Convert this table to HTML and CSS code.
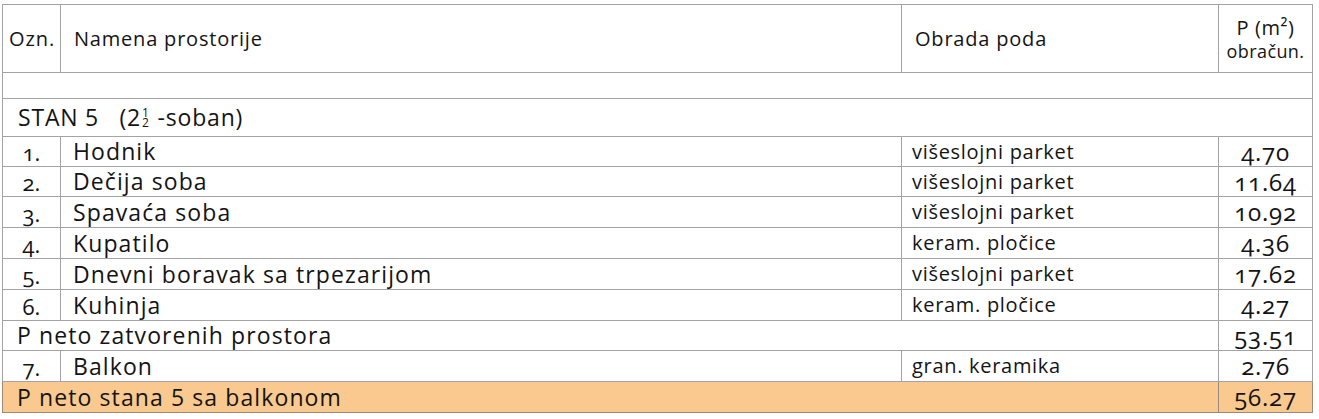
FILE: index.html
```html
<!DOCTYPE html>
<html lang="sr">
<head>
<meta charset="utf-8">
<title>STAN 5</title>
<link rel="stylesheet" href="styles.css">
</head>
<body>
<div class="page">
<table class="rooms">
  <colgroup>
    <col class="c-ozn">
    <col class="c-name">
    <col class="c-floor">
    <col class="c-area">
  </colgroup>
  <tr class="r-head">
    <td class="h-ozn">Ozn.</td>
    <td class="h-name">Namena prostorije</td>
    <td class="h-floor">Obrada poda</td>
    <td class="h-area"><div class="h-p">P (m²)</div><div class="h-obr">obračun.</div></td>
  </tr>
  <tr class="r-empty"><td colspan="4"></td></tr>
  <tr class="r-stan">
    <td colspan="4" class="stan">STAN 5&nbsp;&nbsp; (2<span class="frac"><span>1</span><span>2</span></span> -soban)</td>
  </tr>
  <tr class="r-item r30"><td class="num">1.</td><td class="name">Hodnik</td><td class="floor">višeslojni parket</td><td class="area">4.70</td></tr>
  <tr class="r-item r30"><td class="num">2.</td><td class="name">Dečija soba</td><td class="floor">višeslojni parket</td><td class="area">11.64</td></tr>
  <tr class="r-item"><td class="num">3.</td><td class="name">Spavaća soba</td><td class="floor">višeslojni parket</td><td class="area">10.92</td></tr>
  <tr class="r-item"><td class="num">4.</td><td class="name">Kupatilo</td><td class="floor">keram. pločice</td><td class="area">4.36</td></tr>
  <tr class="r-item"><td class="num">5.</td><td class="name">Dnevni boravak sa trpezarijom</td><td class="floor">višeslojni parket</td><td class="area">17.62</td></tr>
  <tr class="r-item"><td class="num">6.</td><td class="name">Kuhinja</td><td class="floor">keram. pločice</td><td class="area">4.27</td></tr>
  <tr class="r-item r30"><td colspan="3" class="sum">P neto zatvorenih prostora</td><td class="area">53.51</td></tr>
  <tr class="r-item"><td class="num">7.</td><td class="name">Balkon</td><td class="floor">gran. keramika</td><td class="area">2.76</td></tr>
  <tr class="r-item r-total"><td colspan="3" class="sum">P neto stana <span class="lin">5</span> sa balkonom</td><td class="area">56.27</td></tr>
</table>
</div>
</body>
</html>
```

FILE: styles.css
```css
html, body {
  margin: 0;
  padding: 0;
  background: #ffffff;
}

.page {
  padding: 4px 0 0 2px;
}

.rooms {
  border-collapse: collapse;
  table-layout: fixed;
  width: 1310px;
  font-family: "Open Sans", "Noto Sans", sans-serif;
  color: #141414;
  font-variant-numeric: oldstyle-nums;
}

.c-ozn { width: 58px; }
.c-name { width: 841px; }
.c-floor { width: 317px; }
.c-area { width: 94px; }

.rooms td {
  border: 1px solid #a3a3a3;
  padding: 0;
  vertical-align: middle;
  white-space: nowrap;
  line-height: 1;
}

.r-head { height: 68px; }
.r-empty { height: 26px; }
.r-stan { height: 38px; }
.r-item { height: 31px; }
.r-item.r30 { height: 30px; }

.lin { font-variant-numeric: lining-nums; }

.h-ozn {
  font-size: 20px;
  letter-spacing: 0.9px;
  padding-left: 6px !important;
}
.h-name, .h-floor {
  font-size: 20px;
  letter-spacing: 0.8px;
  padding-left: 13px !important;
}
.h-area {
  text-align: center;
}
.h-p { font-size: 20px; letter-spacing: 0.6px; line-height: 20px; }
.h-obr { font-size: 18px; letter-spacing: 0.4px; line-height: 18px; margin-top: 4px; }

.stan {
  font-size: 23px;
  letter-spacing: 0.8px;
  padding-left: 15px !important;
  font-variant-numeric: lining-nums;
}
.frac {
  display: inline-block;
  vertical-align: -1px;
  font-size: 12px;
  margin-left: 1px;
  margin-right: 2px;
  letter-spacing: 0;
}
.frac span {
  display: block;
  line-height: 10px;
}

.num {
  font-size: 22px;
  text-align: center;
  padding-top: 1px !important;
}
.name {
  font-size: 23px;
  letter-spacing: 1.1px;
  padding-left: 12px !important;
}
.floor {
  font-size: 20px;
  letter-spacing: 0.7px;
  padding-left: 10px !important;
}
.area {
  font-size: 24px;
  letter-spacing: 0.8px;
  text-align: center;
}
.sum {
  font-size: 23px;
  letter-spacing: 1.1px;
  padding-left: 14px !important;
}

.r-total td {
  background: #f9c98f;
  border-color: #9c8a78;
}
```
